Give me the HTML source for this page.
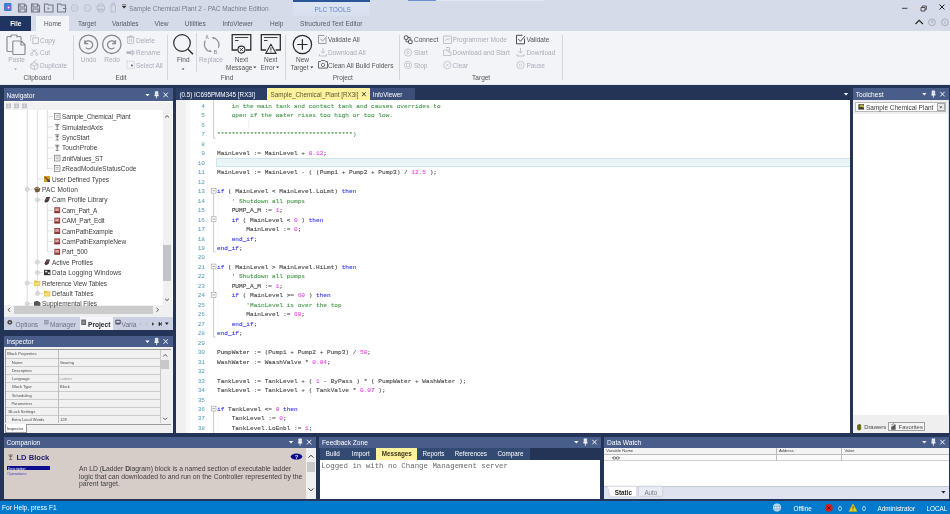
<!DOCTYPE html>
<html lang="en"><head><meta charset="utf-8"><title>Sample Chemical Plant 2 - PAC Machine Edition</title>
<style>
html,body{margin:0;padding:0;}
body{width:950px;height:514px;overflow:hidden;position:relative;background:#233457;font-family:"Liberation Sans",sans-serif;}
#bg div{position:absolute;box-sizing:border-box;}
.t,.tm{position:absolute;white-space:pre;font-family:"Liberation Sans",sans-serif;}
.tm{font-family:"Liberation Mono",monospace;}
#txt,#code{will-change:transform;filter:blur(0.3px);}
#ico,#icb{filter:blur(0.25px);}
#ico,#icb{position:absolute;left:0;top:0;width:950px;height:514px;pointer-events:none;}

#code{position:absolute;left:0;top:0;width:850px;height:433px;overflow:hidden;font-family:"Liberation Mono",monospace;font-size:6.125px;}
.cl{position:absolute;left:0;height:9.47px;line-height:9.47px;white-space:pre;}
.ln{position:absolute;left:190px;width:15px;text-align:right;color:#4d9db8;}
.cd{position:absolute;left:217.0px;-webkit-text-stroke:0.1px;}

</style></head>
<body>
<div id="bg">
<div style="left:0px;top:0px;width:950px;height:31px;background:#d6dbe9;"></div>
<div style="left:292.6px;top:2px;width:77.3px;height:13.5px;background:linear-gradient(#dce4f3,#d8dfee);"></div>
<div style="left:292.6px;top:0px;width:77.3px;height:2px;background:#2b579a;"></div>
<div style="left:408px;top:0px;width:28px;height:1.2px;background:#6d92d2;"></div>
<div style="left:436px;top:0px;width:108px;height:1px;background:#e2e6f0;"></div>
<div style="left:0px;top:15.5px;width:31px;height:15px;background:#1f3461;"></div>
<div style="left:36px;top:16px;width:33px;height:15px;background:#f3f4f7;"></div>
<div style="left:0px;top:31px;width:950px;height:54px;background:#f3f4f7;"></div>
<div style="left:0px;top:84.3px;width:950px;height:1px;background:#e3e6ee;"></div>
<div style="left:72.5px;top:34.5px;width:0.8px;height:45.5px;background:#d3d6df;"></div>
<div style="left:167px;top:34.5px;width:0.8px;height:45.5px;background:#d3d6df;"></div>
<div style="left:285px;top:34.5px;width:0.8px;height:45.5px;background:#d3d6df;"></div>
<div style="left:398.5px;top:34.5px;width:0.8px;height:45.5px;background:#d3d6df;"></div>
<div style="left:562px;top:34.5px;width:0.8px;height:45.5px;background:#d3d6df;"></div>
<div style="left:196.3px;top:32.5px;width:0.8px;height:39.5px;background:#d3d6df;"></div>
<div style="left:3.5px;top:88.3px;width:169px;height:13.2px;background:#485d89;"></div>
<div style="left:3.5px;top:100.9px;width:169px;height:228.9px;background:#ffffff;"></div>
<div style="left:3.5px;top:101.5px;width:169px;height:8.5px;background:#f1f1f2;"></div>
<div style="left:3.5px;top:305.2px;width:169px;height:25.2px;background:#f0f0f0;"></div>
<div style="left:13.5px;top:305.9px;width:139px;height:8px;background:#cbcbcb;"></div>
<div style="left:162.5px;top:110px;width:9.5px;height:196px;background:#f0f0f0;"></div>
<div style="left:163.3px;top:245.3px;width:8px;height:36.2px;background:#c2c3c9;"></div>
<div style="left:3.5px;top:316.5px;width:169px;height:13.3px;background:#cbd1e2;"></div>
<div style="left:80px;top:316.5px;width:32.5px;height:13.3px;background:#f3f5fa;"></div>
<div style="left:3.5px;top:335.6px;width:169px;height:11.8px;background:#485d89;"></div>
<div style="left:3.5px;top:347.4px;width:169px;height:85.2px;background:#f0f0f0;"></div>
<div style="left:5px;top:349px;width:166px;height:74.3px;background:#ffffff;border:0.6px solid #9a9a9a;"></div>
<div style="left:5.5px;top:349.5px;width:154.5px;height:73.4px;background:#f1f1f1;"></div>
<div style="left:5.5px;top:357.82px;width:154.5px;height:0.6px;background:#cbcbcb;"></div>
<div style="left:5.5px;top:366.04px;width:154.5px;height:0.6px;background:#cbcbcb;"></div>
<div style="left:5.5px;top:374.26px;width:154.5px;height:0.6px;background:#cbcbcb;"></div>
<div style="left:5.5px;top:382.48px;width:154.5px;height:0.6px;background:#cbcbcb;"></div>
<div style="left:5.5px;top:390.7px;width:154.5px;height:0.6px;background:#cbcbcb;"></div>
<div style="left:5.5px;top:398.92px;width:154.5px;height:0.6px;background:#cbcbcb;"></div>
<div style="left:5.5px;top:407.14px;width:154.5px;height:0.6px;background:#cbcbcb;"></div>
<div style="left:5.5px;top:415.36px;width:154.5px;height:0.6px;background:#cbcbcb;"></div>
<div style="left:58px;top:349.5px;width:0.8px;height:73.4px;background:#bdbdbd;"></div>
<div style="left:160px;top:349.5px;width:0.6px;height:73.4px;background:#c9c9c9;"></div>
<div style="left:160.6px;top:349.5px;width:10px;height:73.4px;background:#f0f0f0;"></div>
<div style="left:161.3px;top:360.3px;width:7.6px;height:9px;background:#c8c8c8;"></div>
<div style="left:5px;top:423.6px;width:21.5px;height:9px;background:#ffffff;border:0.6px solid #9a9a9a;border-top:none;"></div>
<div style="left:26.5px;top:423.6px;width:144.5px;height:0.7px;background:#9a9a9a;"></div>
<div style="left:175.7px;top:88.3px;width:91.5px;height:11.6px;background:#2a3e66;"></div>
<div style="left:267.3px;top:88.3px;width:103px;height:11.8px;background:#fff29d;"></div>
<div style="left:370.3px;top:88.3px;width:45px;height:11.6px;background:#3b4f7a;"></div>
<div style="left:175.7px;top:100.3px;width:674.3px;height:332.5px;background:#ffffff;"></div>
<div style="left:175.7px;top:100.3px;width:10.5px;height:332.5px;background:#f0f0f0;"></div>
<div style="left:186.2px;top:100.3px;width:4px;height:332.5px;background:#f8f8f8;"></div>
<div style="left:216px;top:157.9px;width:634px;height:9px;background:#e8f4f8;border:0.7px solid #cfe5ec;border-right:none;"></div>
<div style="left:852.7px;top:88.3px;width:96.6px;height:11.6px;background:#485d89;"></div>
<div style="left:852.7px;top:99.9px;width:96.6px;height:333.1px;background:#ffffff;"></div>
<div style="left:852.7px;top:99.9px;width:96.6px;height:14.5px;background:#efefef;"></div>
<div style="left:855px;top:102.3px;width:90.5px;height:9.4px;background:#ffffff;border:0.6px solid #b9b9b9;"></div>
<div style="left:937px;top:103.2px;width:7.6px;height:7.8px;background:#e9e9e9;border:0.5px solid #a8a8a8;"></div>
<div style="left:948.3px;top:99.9px;width:1px;height:333.1px;background:#d0d4de;"></div>
<div style="left:852.7px;top:414.6px;width:96.6px;height:18.4px;background:#efefef;"></div>
<div style="left:888.4px;top:422.2px;width:36.8px;height:9px;background:#f4f4f4;border:0.6px solid #9f9f9f;"></div>
<div style="left:3.5px;top:436.6px;width:312.5px;height:11px;background:#485d89;"></div>
<div style="left:3.5px;top:447.6px;width:312.5px;height:51.599999999999966px;background:#d6cdc9;"></div>
<div style="left:7px;top:466.3px;width:42.5px;height:3.9px;background:#0d0d8c;"></div>
<div style="left:306px;top:447.6px;width:10px;height:51.599999999999966px;background:#f0f0f0;"></div>
<div style="left:306.8px;top:462.3px;width:8px;height:9.6px;background:#c8c8c8;"></div>
<div style="left:319px;top:436.6px;width:282.3px;height:11px;background:#485d89;"></div>
<div style="left:319px;top:447.6px;width:282.3px;height:12px;background:#233457;"></div>
<div style="left:320px;top:447.6px;width:210px;height:12px;background:#334a73;"></div>
<div style="left:376px;top:447.6px;width:41.3px;height:12px;background:#fff29d;"></div>
<div style="left:320px;top:459.6px;width:280.3px;height:38.999999999999964px;background:#ffffff;"></div>
<div style="left:604px;top:436.6px;width:345.3px;height:11px;background:#485d89;"></div>
<div style="left:604px;top:447.6px;width:345.3px;height:51.599999999999966px;background:#ffffff;"></div>
<div style="left:604px;top:447.6px;width:345.3px;height:7.4px;background:#f3f3f3;border-bottom:0.6px solid #bdbdbd;"></div>
<div style="left:604px;top:455.0px;width:345.3px;height:6px;background:#fafafa;border-bottom:0.6px solid #d0d0d0;"></div>
<div style="left:776px;top:447.6px;width:0.7px;height:13.4px;background:#bdbdbd;"></div>
<div style="left:841px;top:447.6px;width:0.7px;height:13.4px;background:#bdbdbd;"></div>
<div style="left:604px;top:485.8px;width:345.3px;height:13.399999999999977px;background:#dfe3ef;border-top:0.6px solid #c2c7d6;"></div>
<div style="left:0px;top:501px;width:950px;height:13px;background:#007acc;"></div>
</div>
<svg id="icb" viewBox="0 0 950 514" width="950" height="514" fill="none">
<ellipse cx="296.5" cy="456.6" rx="5.8" ry="3" fill="#0d0d8c"/>
<path d="M605.5 486.2q2 0 2.6 2.4l1.6 6.4q.5 1.8 2.2 1.8h23.6q1.2 0 1.2-1.2v-9.4z" fill="#ffffff" stroke="#b8bdcc" stroke-width="0.5"/>
<path d="M638.4 486.2v8.8q0 1.2 1.2 1.2h22q1.2 0 1.2-1.2v-8.8z" fill="#e9ecf4" stroke="#b8bdcc" stroke-width="0.5"/>
</svg>
<div id="code"><div class="cl" style="top:101.97px"><span class="ln">4</span><span class="cd"><span style="color:#45984a">    in the main tank and contact tank and causes overrides to</span></span></div>
<div class="cl" style="top:111.44px"><span class="ln">5</span><span class="cd"><span style="color:#45984a">    open if the water rises too high or too low.</span></span></div>
<div class="cl" style="top:120.91px"><span class="ln">6</span><span class="cd"></span></div>
<div class="cl" style="top:130.37px"><span class="ln">7</span><span class="cd"><span style="color:#45984a">*************************************)</span></span></div>
<div class="cl" style="top:139.84px"><span class="ln">8</span><span class="cd"></span></div>
<div class="cl" style="top:149.31px"><span class="ln">9</span><span class="cd"><span style="color:#444444">MainLevel := MainLevel + </span><span style="color:#e94be9">0.12</span><span style="color:#444444">;</span></span></div>
<div class="cl" style="top:158.78px"><span class="ln">10</span><span class="cd"></span></div>
<div class="cl" style="top:168.25px"><span class="ln">11</span><span class="cd"><span style="color:#444444">MainLevel := MainLevel - ( (Pump1 + Pump2 + Pump3) / </span><span style="color:#e94be9">12.5</span><span style="color:#444444"> );</span></span></div>
<div class="cl" style="top:177.72px"><span class="ln">12</span><span class="cd"></span></div>
<div class="cl" style="top:187.19px"><span class="ln">13</span><span class="cd"><span style="color:#3535ee">if</span><span style="color:#444444"> ( MainLevel &lt; MainLevel.LoLmt) </span><span style="color:#3535ee">then</span></span></div>
<div class="cl" style="top:196.66px"><span class="ln">14</span><span class="cd"><span style="color:#45984a">    &#x27; Shutdown all pumps</span></span></div>
<div class="cl" style="top:206.13px"><span class="ln">15</span><span class="cd"><span style="color:#444444">    PUMP_A_M := </span><span style="color:#e94be9">1</span><span style="color:#444444">;</span></span></div>
<div class="cl" style="top:215.6px"><span class="ln">16</span><span class="cd"><span style="color:#3535ee">    if</span><span style="color:#444444"> ( MainLevel &lt; </span><span style="color:#e94be9">0</span><span style="color:#444444"> ) </span><span style="color:#3535ee">then</span></span></div>
<div class="cl" style="top:225.07px"><span class="ln">17</span><span class="cd"><span style="color:#444444">        MainLevel := </span><span style="color:#e94be9">0</span><span style="color:#444444">;</span></span></div>
<div class="cl" style="top:234.54px"><span class="ln">18</span><span class="cd"><span style="color:#3535ee">    end_if</span><span style="color:#444444">;</span></span></div>
<div class="cl" style="top:244.01px"><span class="ln">19</span><span class="cd"><span style="color:#3535ee">end_if</span><span style="color:#444444">;</span></span></div>
<div class="cl" style="top:253.48px"><span class="ln">20</span><span class="cd"></span></div>
<div class="cl" style="top:262.95px"><span class="ln">21</span><span class="cd"><span style="color:#3535ee">if</span><span style="color:#444444"> ( MainLevel &gt; MainLevel.HiLmt) </span><span style="color:#3535ee">then</span></span></div>
<div class="cl" style="top:272.43px"><span class="ln">22</span><span class="cd"><span style="color:#45984a">    &#x27; Shutdown all pumps</span></span></div>
<div class="cl" style="top:281.89px"><span class="ln">23</span><span class="cd"><span style="color:#444444">    PUMP_A_M := </span><span style="color:#e94be9">1</span><span style="color:#444444">;</span></span></div>
<div class="cl" style="top:291.36px"><span class="ln">24</span><span class="cd"><span style="color:#3535ee">    if</span><span style="color:#444444"> ( MainLevel &gt;= </span><span style="color:#e94be9">60</span><span style="color:#444444"> ) </span><span style="color:#3535ee">then</span></span></div>
<div class="cl" style="top:300.83px"><span class="ln">25</span><span class="cd"><span style="color:#45984a">        &#x27;MainLevel is over the top</span></span></div>
<div class="cl" style="top:310.31px"><span class="ln">26</span><span class="cd"><span style="color:#444444">        MainLevel := </span><span style="color:#e94be9">60</span><span style="color:#444444">;</span></span></div>
<div class="cl" style="top:319.77px"><span class="ln">27</span><span class="cd"><span style="color:#3535ee">    end_if</span><span style="color:#444444">;</span></span></div>
<div class="cl" style="top:329.25px"><span class="ln">28</span><span class="cd"><span style="color:#3535ee">end_if</span><span style="color:#444444">;</span></span></div>
<div class="cl" style="top:338.71px"><span class="ln">29</span><span class="cd"></span></div>
<div class="cl" style="top:348.19px"><span class="ln">30</span><span class="cd"><span style="color:#444444">PumpWater := (Pump1 + Pump2 + Pump3) / </span><span style="color:#e94be9">50</span><span style="color:#444444">;</span></span></div>
<div class="cl" style="top:357.66px"><span class="ln">31</span><span class="cd"><span style="color:#444444">WashWater := WaashValve * </span><span style="color:#e94be9">0.04</span><span style="color:#444444">;</span></span></div>
<div class="cl" style="top:367.12px"><span class="ln">32</span><span class="cd"></span></div>
<div class="cl" style="top:376.59px"><span class="ln">33</span><span class="cd"><span style="color:#444444">TankLevel := TankLevel + ( </span><span style="color:#e94be9">1</span><span style="color:#444444"> - ByPass ) * ( PumpWater + WashWater );</span></span></div>
<div class="cl" style="top:386.06px"><span class="ln">34</span><span class="cd"><span style="color:#444444">TankLevel := TankLevel + ( TankValve * </span><span style="color:#e94be9">0.07</span><span style="color:#444444"> );</span></span></div>
<div class="cl" style="top:395.53px"><span class="ln">35</span><span class="cd"></span></div>
<div class="cl" style="top:405.0px"><span class="ln">36</span><span class="cd"><span style="color:#3535ee">if</span><span style="color:#444444"> TankLevel &lt;= </span><span style="color:#e94be9">0</span><span style="color:#3535ee"> then</span></span></div>
<div class="cl" style="top:414.48px"><span class="ln">37</span><span class="cd"><span style="color:#444444">    TankLevel := </span><span style="color:#e94be9">0</span><span style="color:#444444">;</span></span></div>
<div class="cl" style="top:423.94px"><span class="ln">38</span><span class="cd"><span style="color:#444444">    TankLevel.LoEnbl := </span><span style="color:#e94be9">1</span><span style="color:#444444">;</span></span></div></div>
<div id="txt">
<span class="t" style='left:314.58px;top:5.94px;font-size:6.5px;line-height:7.8px;color:#5f86c4;'>PLC TOOLS</span>
<span class="t" style='left:128.9px;top:5.14px;font-size:6.5px;line-height:7.8px;color:#777c88;'>Sample Chemical Plant 2 - PAC Machine Edition</span>
<span class="t" style='left:10.15px;top:19.94px;font-size:6.5px;line-height:7.8px;color:#ffffff;font-weight:700;'>File</span>
<span class="t" style='left:44.08px;top:19.94px;font-size:6.5px;line-height:7.8px;color:#555555;'>Home</span>
<span class="t" style='left:77.97px;top:19.94px;font-size:6.5px;line-height:7.8px;color:#555a66;'>Target</span>
<span class="t" style='left:111.94px;top:19.94px;font-size:6.5px;line-height:7.8px;color:#555a66;'>Variables</span>
<span class="t" style='left:154.51px;top:19.94px;font-size:6.5px;line-height:7.8px;color:#555a66;'>View</span>
<span class="t" style='left:184.78px;top:19.94px;font-size:6.5px;line-height:7.8px;color:#555a66;'>Utilities</span>
<span class="t" style='left:222.45px;top:19.94px;font-size:6.5px;line-height:7.8px;color:#555a66;'>InfoViewer</span>
<span class="t" style='left:270.07px;top:19.94px;font-size:6.5px;line-height:7.8px;color:#555a66;'>Help</span>
<span class="t" style='left:300.06px;top:19.94px;font-size:6.5px;line-height:7.8px;color:#555a66;'>Structured Text Editor</span>
<span class="t" style='left:23.59px;top:74.14px;font-size:6.5px;line-height:7.8px;color:#555;'>Clipboard</span>
<span class="t" style='left:115.4px;top:74.14px;font-size:6.5px;line-height:7.8px;color:#555;'>Edit</span>
<span class="t" style='left:220.68px;top:74.14px;font-size:6.5px;line-height:7.8px;color:#555;'>Find</span>
<span class="t" style='left:332.63px;top:74.14px;font-size:6.5px;line-height:7.8px;color:#555;'>Project</span>
<span class="t" style='left:472.12px;top:74.14px;font-size:6.5px;line-height:7.8px;color:#555;'>Target</span>
<span class="t" style='left:8.19px;top:55.64px;font-size:6.5px;line-height:7.8px;color:#a9adb8;'>Paste</span>
<span class="t" style='left:40px;top:36.64px;font-size:6.5px;line-height:7.8px;color:#a9adb8;'>Copy</span>
<span class="t" style='left:40px;top:49.14px;font-size:6.5px;line-height:7.8px;color:#a9adb8;'>Cut</span>
<span class="t" style='left:40px;top:61.64px;font-size:6.5px;line-height:7.8px;color:#a9adb8;'>Duplicate</span>
<span class="t" style='left:80.73px;top:55.64px;font-size:6.5px;line-height:7.8px;color:#a9adb8;'>Undo</span>
<span class="t" style='left:104.23px;top:55.64px;font-size:6.5px;line-height:7.8px;color:#a9adb8;'>Redo</span>
<span class="t" style='left:136px;top:36.64px;font-size:6.5px;line-height:7.8px;color:#a9adb8;'>Delete</span>
<span class="t" style='left:136px;top:49.14px;font-size:6.5px;line-height:7.8px;color:#a9adb8;'>Rename</span>
<span class="t" style='left:136px;top:61.64px;font-size:6.5px;line-height:7.8px;color:#a9adb8;'>Select All</span>
<span class="t" style='left:176.93px;top:55.64px;font-size:6.5px;line-height:7.8px;color:#555555;'>Find</span>
<span class="t" style='left:199.08px;top:55.64px;font-size:6.5px;line-height:7.8px;color:#a9adb8;'>Replace</span>
<span class="t" style='left:234.82px;top:55.64px;font-size:6.5px;line-height:7.8px;color:#555555;'>Next</span>
<span class="t" style='left:226.01px;top:64.14px;font-size:6.5px;line-height:7.8px;color:#555555;'>Message</span>
<span class="t" style='left:264.07px;top:55.64px;font-size:6.5px;line-height:7.8px;color:#555555;'>Next</span>
<span class="t" style='left:260.43px;top:64.14px;font-size:6.5px;line-height:7.8px;color:#555555;'>Error</span>
<span class="t" style='left:296.0px;top:55.64px;font-size:6.5px;line-height:7.8px;color:#555555;'>New</span>
<span class="t" style='left:290.47px;top:64.14px;font-size:6.5px;line-height:7.8px;color:#555555;'>Target</span>
<span class="t" style='left:328px;top:36.14px;font-size:6.5px;line-height:7.8px;color:#555555;'>Validate All</span>
<span class="t" style='left:328px;top:49.14px;font-size:6.5px;line-height:7.8px;color:#a9adb8;'>Download All</span>
<span class="t" style='left:328px;top:61.64px;font-size:6.5px;line-height:7.8px;color:#555555;'>Clean All Build Folders</span>
<span class="t" style='left:414px;top:36.14px;font-size:6.5px;line-height:7.8px;color:#555555;'>Connect</span>
<span class="t" style='left:414px;top:49.14px;font-size:6.5px;line-height:7.8px;color:#a9adb8;'>Start</span>
<span class="t" style='left:414px;top:61.64px;font-size:6.5px;line-height:7.8px;color:#a9adb8;'>Stop</span>
<span class="t" style='left:452.6px;top:36.14px;font-size:6.5px;line-height:7.8px;color:#a9adb8;'>Programmer Mode</span>
<span class="t" style='left:452.6px;top:49.14px;font-size:6.5px;line-height:7.8px;color:#a9adb8;'>Download and Start</span>
<span class="t" style='left:452.6px;top:61.64px;font-size:6.5px;line-height:7.8px;color:#a9adb8;'>Clear</span>
<span class="t" style='left:526.4px;top:36.14px;font-size:6.5px;line-height:7.8px;color:#555555;'>Validate</span>
<span class="t" style='left:526.4px;top:49.14px;font-size:6.5px;line-height:7.8px;color:#a9adb8;'>Download</span>
<span class="t" style='left:526.4px;top:61.64px;font-size:6.5px;line-height:7.8px;color:#a9adb8;'>Pause</span>
<span class="t" style='left:205.54px;top:35.16px;font-size:4.6px;line-height:5.52px;color:#8f929b;font-weight:700;'>A</span>
<span class="t" style='left:213.64px;top:50.36px;font-size:4.6px;line-height:5.52px;color:#8f929b;font-weight:700;'>B</span>
<span class="t" style='left:6.5px;top:91.68px;font-size:6.6px;line-height:7.92px;color:#ffffff;'>Navigator</span>
<span class="t" style='left:62px;top:113.24px;font-size:6.5px;line-height:7.8px;color:#3d3d3d;letter-spacing:-0.137px;'>Sample_Chemical_Plant</span>
<span class="t" style='left:62px;top:123.64px;font-size:6.5px;line-height:7.8px;color:#3d3d3d;letter-spacing:-0.014px;'>SimulatedAxis</span>
<span class="t" style='left:62px;top:134.04px;font-size:6.5px;line-height:7.8px;color:#3d3d3d;letter-spacing:-0.075px;'>SyncStart</span>
<span class="t" style='left:62px;top:144.44px;font-size:6.5px;line-height:7.8px;color:#3d3d3d;letter-spacing:0.081px;'>TouchProbe</span>
<span class="t" style='left:62px;top:154.84px;font-size:6.5px;line-height:7.8px;color:#3d3d3d;letter-spacing:-0.134px;'>zinitValues_ST</span>
<span class="t" style='left:62px;top:165.24px;font-size:6.5px;line-height:7.8px;color:#3d3d3d;letter-spacing:0.02px;'>zReadModuleStatusCode</span>
<span class="t" style='left:52px;top:175.64px;font-size:6.5px;line-height:7.8px;color:#3d3d3d;letter-spacing:0.002px;'>User Defined Types</span>
<span class="t" style='left:42px;top:186.04px;font-size:6.5px;line-height:7.8px;color:#3d3d3d;letter-spacing:0.18px;'>PAC Motion</span>
<span class="t" style='left:52px;top:196.44px;font-size:6.5px;line-height:7.8px;color:#3d3d3d;letter-spacing:-0.007px;'>Cam Profile Library</span>
<span class="t" style='left:62px;top:206.84px;font-size:6.5px;line-height:7.8px;color:#3d3d3d;letter-spacing:-0.221px;'>Cam_Part_A</span>
<span class="t" style='left:62px;top:217.24px;font-size:6.5px;line-height:7.8px;color:#3d3d3d;letter-spacing:-0.177px;'>CAM_Part_Edit</span>
<span class="t" style='left:62px;top:227.64px;font-size:6.5px;line-height:7.8px;color:#3d3d3d;letter-spacing:-0.099px;'>CamPathExample</span>
<span class="t" style='left:62px;top:238.04px;font-size:6.5px;line-height:7.8px;color:#3d3d3d;letter-spacing:-0.082px;'>CamPathExampleNew</span>
<span class="t" style='left:62px;top:248.44px;font-size:6.5px;line-height:7.8px;color:#3d3d3d;letter-spacing:-0.11px;'>Part_500</span>
<span class="t" style='left:52px;top:258.84px;font-size:6.5px;line-height:7.8px;color:#3d3d3d;letter-spacing:-0.012px;'>Active Profiles</span>
<span class="t" style='left:52px;top:269.24px;font-size:6.5px;line-height:7.8px;color:#3d3d3d;letter-spacing:0.133px;'>Data Logging Windows</span>
<span class="t" style='left:42px;top:279.64px;font-size:6.5px;line-height:7.8px;color:#3d3d3d;letter-spacing:-0.059px;'>Reference View Tables</span>
<span class="t" style='left:52px;top:290.04px;font-size:6.5px;line-height:7.8px;color:#3d3d3d;letter-spacing:0.031px;'>Default Tables</span>
<span class="t" style='left:42px;top:300.44px;font-size:6.5px;line-height:7.8px;color:#3d3d3d;letter-spacing:-0.016px;'>Supplemental Files</span>
<span class="t" style='left:15.38px;top:320.78px;font-size:6.6px;line-height:7.92px;color:#6b7388;'>Options</span>
<span class="t" style='left:49.98px;top:320.78px;font-size:6.6px;line-height:7.92px;color:#6b7388;'>Manager</span>
<span class="t" style='left:88.06px;top:320.78px;font-size:6.6px;line-height:7.92px;color:#2b2b2b;font-weight:700;'>Project</span>
<span class="t" style='left:121.54px;top:320.78px;font-size:6.6px;line-height:7.92px;color:#6b7388;'>Varia</span>
<span class="t" style='left:6.5px;top:338.28px;font-size:6.6px;line-height:7.92px;color:#ffffff;'>Inspector</span>
<span class="t" style='left:7.34px;top:352.44px;font-size:4.0px;line-height:4.8px;color:#4c4c4c;'>Block Properties</span>
<span class="t" style='left:11.81px;top:360.66px;font-size:4.0px;line-height:4.8px;color:#4c4c4c;'>Name</span>
<span class="t" style='left:11.7px;top:368.88px;font-size:4.0px;line-height:4.8px;color:#4c4c4c;'>Description</span>
<span class="t" style='left:11.95px;top:377.1px;font-size:4.0px;line-height:4.8px;color:#4c4c4c;'>Language</span>
<span class="t" style='left:12.15px;top:385.32px;font-size:4.0px;line-height:4.8px;color:#4c4c4c;'>Block Type</span>
<span class="t" style='left:11.9px;top:393.54px;font-size:4.0px;line-height:4.8px;color:#4c4c4c;'>Scheduling</span>
<span class="t" style='left:11.46px;top:401.76px;font-size:4.0px;line-height:4.8px;color:#4c4c4c;'>Parameters</span>
<span class="t" style='left:8.56px;top:409.98px;font-size:4.0px;line-height:4.8px;color:#4c4c4c;'>BLock Settings</span>
<span class="t" style='left:11.7px;top:418.2px;font-size:4.0px;line-height:4.8px;color:#4c4c4c;'>Extra Local Words</span>
<span class="t" style='left:59.63px;top:360.64px;font-size:4.0px;line-height:4.8px;color:#4c4c4c;'>Gearing</span>
<span class="t" style='left:59.62px;top:377.14px;font-size:4.0px;line-height:4.8px;color:#a0a0a0;'>Ladder</span>
<span class="t" style='left:60.06px;top:385.34px;font-size:4.0px;line-height:4.8px;color:#4c4c4c;'>Block</span>
<span class="t" style='left:60.06px;top:418.24px;font-size:4.0px;line-height:4.8px;color:#4c4c4c;'>128</span>
<span class="t" style='left:6.67px;top:426.84px;font-size:4.0px;line-height:4.8px;color:#333;'>Inspector</span>
<span class="t" style='left:179.43px;top:91.07px;font-size:6.3px;line-height:7.56px;color:#ffffff;'>(0.5) IC695PMM345 [RX3i]</span>
<span class="t" style='left:270.55px;top:91.07px;font-size:6.3px;line-height:7.56px;color:#5b5536;'>Sample_Chemical_Plant [RX3i]</span>
<span class="t" style='left:372.67px;top:91.07px;font-size:6.3px;line-height:7.56px;color:#ffffff;'>InfoViewer</span>
<span class="t" style='left:855.7px;top:90.88px;font-size:6.6px;line-height:7.92px;color:#ffffff;'>Toolchest</span>
<span class="t" style='left:866px;top:103.85px;font-size:6.49px;line-height:7.79px;color:#3a3a3a;'>Sample Chemical Plant</span>
<span class="t" style='left:864.17px;top:423.82px;font-size:5.9px;line-height:7.08px;color:#4a4a4a;'>Drawers</span>
<span class="t" style='left:898.62px;top:423.82px;font-size:5.9px;line-height:7.08px;color:#4a4a4a;'>Favorites</span>
<span class="t" style='left:6.5px;top:438.88px;font-size:6.6px;line-height:7.92px;color:#ffffff;'>Companion</span>
<span class="t" style='left:16.43px;top:452.74px;font-size:7.6px;line-height:9.12px;color:#1e1b6e;font-weight:700;'>LD Block</span>
<span class="t" style='left:294.97px;top:454.1px;font-size:5px;line-height:6.0px;color:#ffffff;font-weight:700;'>?</span>
<span class="t" style='left:7.65px;top:466.8px;font-size:3.6px;line-height:4.32px;color:#ffffff;'>Description</span>
<span class="t" style='left:7.36px;top:472.2px;font-size:3.9px;line-height:4.68px;color:#4343c4;'>Operations</span>
<span class="t" style='left:79px;top:465.08px;font-size:6.75px;line-height:8.1px;color:#404040;'>An LD (<b>L</b>adder <b>D</b>iagram) block is a named section of executable ladder</span>
<span class="t" style='left:79px;top:472.52px;font-size:6.85px;line-height:8.22px;color:#404040;'>logic that can downloaded to and run on the Controller represented by the</span>
<span class="t" style='left:79px;top:479.89px;font-size:6.89px;line-height:8.27px;color:#404040;'>parent target.</span>
<span class="t" style='left:322px;top:438.88px;font-size:6.6px;line-height:7.92px;color:#ffffff;'>Feedback Zone</span>
<span class="t" style='left:325.75px;top:450.37px;font-size:6.3px;line-height:7.56px;color:#ffffff;'>Build</span>
<span class="t" style='left:351.82px;top:450.37px;font-size:6.3px;line-height:7.56px;color:#ffffff;'>Import</span>
<span class="t" style='left:381.69px;top:450.37px;font-size:6.3px;line-height:7.56px;color:#3b371f;font-weight:700;'>Messages</span>
<span class="t" style='left:422.47px;top:450.37px;font-size:6.3px;line-height:7.56px;color:#ffffff;'>Reports</span>
<span class="t" style='left:454.64px;top:450.37px;font-size:6.3px;line-height:7.56px;color:#ffffff;'>References</span>
<span class="t" style='left:497.54px;top:450.37px;font-size:6.3px;line-height:7.56px;color:#ffffff;'>Compare</span>
<span class="tm" style='left:321.3px;top:461.65px;font-size:7.42px;line-height:8.9px;color:#6a6a6a;'>Logged in with no Change Management server</span>
<span class="t" style='left:607px;top:438.88px;font-size:6.6px;line-height:7.92px;color:#ffffff;'>Data Watch</span>
<span class="t" style='left:606.34px;top:449.48px;font-size:4.1px;line-height:4.92px;color:#444;'>Variable Name</span>
<span class="t" style='left:778.88px;top:449.48px;font-size:4.1px;line-height:4.92px;color:#444;'>Address</span>
<span class="t" style='left:844.41px;top:449.48px;font-size:4.1px;line-height:4.92px;color:#444;'>Value</span>
<span class="t" style='left:614.82px;top:488.77px;font-size:6.3px;line-height:7.56px;color:#222;font-weight:700;'>Static</span>
<span class="t" style='left:644.42px;top:488.77px;font-size:6.3px;line-height:7.56px;color:#777;'>Auto</span>
<span class="t" style='left:2px;top:504.18px;font-size:6.6px;line-height:7.92px;color:#ffffff;'>For Help, press F1</span>
<span class="t" style='left:793.56px;top:504.5px;font-size:6.4px;line-height:7.68px;color:#ffffff;'>Offline</span>
<span class="t" style='left:838.37px;top:504.5px;font-size:6.4px;line-height:7.68px;color:#ffffff;'>0</span>
<span class="t" style='left:862.37px;top:504.5px;font-size:6.4px;line-height:7.68px;color:#ffffff;'>0</span>
<span class="t" style='left:877.4px;top:504.5px;font-size:6.4px;line-height:7.68px;color:#ffffff;'>Administrator</span>
<span class="t" style='left:926.41px;top:504.5px;font-size:6.4px;line-height:7.68px;color:#ffffff;'>LOCAL</span>
</div>
<svg id="ico" viewBox="0 0 950 514" width="950" height="514" fill="none">
<rect x="4" y="3" width="7.5" height="8" rx="1" fill="#3b7fd1"/><circle cx="8.6" cy="7.6" r="2" fill="#c65bd0"/><circle cx="8.6" cy="7.6" r="0.8" fill="#fff"/>
<path d="M18.5 4h6l2 2v6h-8z M20.0 4v3h4.5v-3 M20.0 12v-3h5v3" stroke="#777a84" stroke-width="1.1"/>
<path d="M31.5 4h6l2 2v6h-8z M33.0 4v3h4.5v-3 M33.0 12v-3h5v3" stroke="#777a84" stroke-width="1.1"/>
<path d="M44.5 4h3l1 1h4.5v7h-8.5z" stroke="#777a84" stroke-width="1.1"/><path d="M47.5 7l2.5 1.5-2.5 1.5z" fill="#8d919c"/>
<path d="M57.5 4h3l1 1h4v7h-8z M63 8.5h3.5" stroke="#777a84" stroke-width="1.1"/>
<circle cx="74.5" cy="8" r="3.4" stroke="#b4b8c2" stroke-width="0.7"/><path d="M73.0 8h3" stroke="#b4b8c2" stroke-width="0.7"/>
<circle cx="87.5" cy="8" r="3.4" stroke="#b4b8c2" stroke-width="0.7"/><path d="M86.0 8h3" stroke="#b4b8c2" stroke-width="0.7"/>
<path d="M97 6h7.5v4h-7.5z M98.5 6v-2h4.5v2 M98.5 9h4.5v3h-4.5z" stroke="#b4b8c2" stroke-width="0.8"/>
<path d="M111 5h4.5v7h-4.5z M112 5v-2h2.5v2" stroke="#b4b8c2" stroke-width="0.8"/>
<path d="M121.8 6h4.6l-2.3 2.6z" fill="#333"/><path d="M122 4.8h4.2" stroke="#333" stroke-width="0.7"/>
<path d="M902 8.3h5.5" stroke="#333" stroke-width="0.9"/>
<path d="M921 7.5h4v3.5h-4z M922.3 7.5v-1.5h4v3.5h-1.3" stroke="#333" stroke-width="0.8"/>
<path d="M939.5 4.5l5 5 M944.5 4.5l-5 5" stroke="#222" stroke-width="1"/>
<path d="M915.5 24l3.7-3.7 3.7 3.7" stroke="#222" stroke-width="1.1"/>
<circle cx="932" cy="22.3" r="3.4" stroke="#8d919c" stroke-width="0.6"/><circle cx="945" cy="22.3" r="3.4" stroke="#8d919c" stroke-width="0.6"/>
<path d="M931 21.3q1-1.2 2 0q0 .8-1 1.4v.6 M945 21.2v2.6" stroke="#8d919c" stroke-width="0.6"/>
<path d="M11 36.5h-3.2q-.8 0-.8.8v13.4q0 .8.8.8h4.2 M17 36.5h3.2q.8 0 .8.8v3 M11 37.5v-1.8q0-.7.7-.7h4.6q.7 0 .7.7v1.8" stroke="#8a8d96" stroke-width="1.2"/>
<path d="M13.5 41h8l3.5 3.5v9.3q0 .7-.7.7h-10.8q-.7 0-.7-.7v-12.1q0-.7.7-.7z M21 41v4h4" stroke="#8a8d96" stroke-width="1.2"/>
<path d="M14.2 68.5h2.6l-1.3 1.5z" fill="#8d919c"/>
<path d="M30.6 40.6v-5h5.2" stroke="#b4b8c2" stroke-width="0.8" stroke-dasharray="1.2 .6"/><path d="M32.8 37.8h5.6v5.8h-5.6z" stroke="#b4b8c2" stroke-width="0.9"/>
<path d="M31.5 49l5.5 4 M37 49l-5.5 4" stroke="#b4b8c2" stroke-width="0.8"/><circle cx="31.7" cy="54.3" r="1.2" stroke="#b4b8c2" stroke-width="0.7"/><circle cx="36.8" cy="54.3" r="1.2" stroke="#b4b8c2" stroke-width="0.7"/>
<path d="M30.8 64.2l3.6-1.8 3.6 1.8v3.8l-3.6 1.8-3.6-1.8z M30.8 64.2l3.6 1.8 3.6-1.8 M34.4 66v3.8 M33.2 62.4l3.4-2.6" stroke="#b4b8c2" stroke-width="0.8"/>
<circle cx="88.5" cy="44.3" r="9.2" stroke="#85888f" stroke-width="1.3"/><circle cx="111.8" cy="44.3" r="9.2" stroke="#85888f" stroke-width="1.3"/>
<path d="M84.8 40.2v3.4h3.4 M85.1 43A4 4 0 1 1 85.8 47.6" stroke="#85888f" stroke-width="1.3"/>
<path d="M115.4 40.2v3.4h-3.4 M115.1 43A4 4 0 1 0 114.4 47.6" stroke="#85888f" stroke-width="1.3"/><path d="M115.8 40.4v3.6h-3.6z" fill="#8d919c"/>
<path d="M127.6 37h6v6.4h-6z M129.6 37v-1.2h2v1.2 M126.8 37h7.6 M129.6 38.6v3.2 M131.6 38.6v3.2" stroke="#b4b8c2" stroke-width="0.8"/>
<path d="M126.5 51.2h5v2.8h-5z" fill="#b4b8c2"/><path d="M131.5 51.2h2.6v2.8h-2.6 M132.3 49.6v6" stroke="#b4b8c2" stroke-width="0.8"/>
<path d="M127 61.3h7.4v7.4h-7.4z" stroke="#b4b8c2" stroke-width="0.7" stroke-dasharray="1 .8"/><rect x="131" y="64.6" width="1.8" height="1.8" fill="#666"/>
<circle cx="182" cy="43" r="8.3" stroke="#2a2a2a" stroke-width="1.2"/><path d="M188 49.2l5 5" stroke="#2a2a2a" stroke-width="1.4"/>
<path d="M181.8 68.5h2.6l-1.3 1.5z" fill="#333"/>
<path d="M205.3 40.6Q202.6 46 207.6 50.8L210.6 51.7" stroke="#8f929b" stroke-width="1.25"/><path d="M211.8 52l-3-.2 1.2-2.2z" fill="#8f929b"/>
<path d="M218.4 47.8Q220.4 42.4 215.4 38.6L213.2 37.6" stroke="#8f929b" stroke-width="1.25"/><path d="M211.8 37l3 .2-1.2 2.2z" fill="#8f929b"/>
<path d="M237.5 50h-5.3v-15.4h18.6v15.4h-5.3" stroke="#2e2e2e" stroke-width="1.3"/><path d="M235 37.5h13.2 M235 40.5h3.5" stroke="#2e2e2e" stroke-width="0.9"/><circle cx="241.4" cy="49.6" r="3.5" stroke="#2e2e2e" stroke-width="1.1"/><path d="M239.9 48.1l3 3 M242.9 48.1l-3 3" stroke="#2e2e2e" stroke-width="0.9"/>
<path d="M253.3 66.6h3l-1.5 1.7z" fill="#333"/>
<path d="M266 50h-4.7v-15.4h19v15.4h-4.7" stroke="#2e2e2e" stroke-width="1.3"/><path d="M264 37.5h13.6 M264 40.5h3.5" stroke="#2e2e2e" stroke-width="0.9"/><path d="M270.9 44.2l5.2 9.2h-10.4z" stroke="#2e2e2e" stroke-width="1.1" stroke-linejoin="round"/><path d="M270.9 47.3v3.2 M270.9 51.3v.9" stroke="#2e2e2e" stroke-width="0.9"/>
<path d="M276.1 66.6h3l-1.5 1.7z" fill="#333"/>
<circle cx="302.4" cy="44.5" r="9.2" stroke="#2a2a2a" stroke-width="1.2"/><path d="M297.2 44.5h10.4 M302.4 39.3v10.4" stroke="#2a2a2a" stroke-width="1.2"/>
<path d="M310.3 66.6h3l-1.5 1.7z" fill="#333"/>
<path d="M326 38v5.5h-7.5v-8h6" stroke="#8d919c" stroke-width="0.9"/><path d="M320.5 39l2 2.2 4.3-5" stroke="#8d919c" stroke-width="0.9"/>
<path d="M323 48v5 M321 51.2l2 2 2-2 M319.5 54v2h7v-2" stroke="#b4b8c2" stroke-width="0.8"/>
<path d="M318.5 61.6h2l.8-1h3.4l.8 1h2v6.5h-9z" stroke="#5a5a5a" stroke-width="0.9"/><circle cx="323" cy="64.9" r="1.7" stroke="#5a5a5a" stroke-width="0.8"/>
<rect x="404.3" y="35.8" width="3.6" height="3.6" rx="1" stroke="#3c3c3c" stroke-width="0.9"/><rect x="408.5" y="40" width="3.6" height="3.6" rx="1" stroke="#3c3c3c" stroke-width="0.9"/><path d="M408 37.5h2.2v2.3 M406 39.5v2.3h2.4" stroke="#3c3c3c" stroke-width="0.8"/>
<circle cx="408" cy="52.5" r="3.7" stroke="#b4b8c2" stroke-width="0.7"/><path d="M407 50.8l2.5 1.7-2.5 1.7z" stroke="#b4b8c2" stroke-width="0.6"/>
<circle cx="408" cy="65" r="3.7" stroke="#b4b8c2" stroke-width="0.7"/><rect x="406.5" y="63.5" width="3" height="3" stroke="#b4b8c2" stroke-width="0.6"/>
<path d="M443.5 36h8v7.5h-8z M445 41l2-2.3 1.5 1.3 1.8-2" stroke="#b4b8c2" stroke-width="0.8"/>
<path d="M446 47.5h3.5v4 M443.5 55.5v-5.5h4.5v2h3v3.5z" stroke="#b4b8c2" stroke-width="0.8"/>
<circle cx="447.3" cy="65" r="3.7" stroke="#b4b8c2" stroke-width="0.7"/><path d="M446 63.7l2.6 2.6 M448.6 63.7l-2.6 2.6" stroke="#b4b8c2" stroke-width="0.6"/>
<path d="M524.5 38.5v5.3h-8v-8.5h6" stroke="#3c3c3c" stroke-width="0.9"/><path d="M518.3 39l2.2 2.3 4.5-5.3" stroke="#3c3c3c" stroke-width="0.9"/>
<path d="M520.5 48v5 M518.5 51.2l2 2 2-2 M517 54v2h7v-2" stroke="#b4b8c2" stroke-width="0.8"/>
<circle cx="520.5" cy="65" r="3.7" stroke="#b4b8c2" stroke-width="0.7"/><path d="M519.6 63.5v3 M521.4 63.5v3" stroke="#b4b8c2" stroke-width="0.6"/>
<path d="M145.3 93.89999999999999h4.4l-2.2 2.4z" fill="#fff"/>
<path d="M155.3 91.69999999999999h2.6v4h-2.6z" fill="#dbe2ef" stroke="#fff" stroke-width="0.7"/><path d="M154.3 95.69999999999999h4.6 M156.6 95.69999999999999v2.8" stroke="#fff" stroke-width="0.8"/>
<path d="M163.5 92.6l4.4 4.6 M167.9 92.6l-4.4 4.6" stroke="#fff" stroke-width="0.95"/>
<rect x="6" y="103.6" width="5" height="4.6" fill="#b9bbc2"/><path d="M6 105.2h5 M6 106.8h5 M8.5 103.6v4.6" stroke="#e4e4e8" stroke-width="0.5"/>
<rect x="14" y="103.6" width="5" height="4.6" fill="#b9bbc2"/><path d="M14 105.2h5 M14 106.8h5 M16.5 103.6v4.6" stroke="#e4e4e8" stroke-width="0.5"/>
<rect x="22" y="103.6" width="5" height="4.6" fill="#b9bbc2"/><path d="M22 105.2h5 M22 106.8h5 M24.5 103.6v4.6" stroke="#e4e4e8" stroke-width="0.5"/>
<path d="M27.2 110v196 M37.4 110v183.5 M47.4 110v59 M47.4 203v49" stroke="#d2d2d2" stroke-width="0.7"/>
<path d="M47.4 116.6h5.600000000000001" stroke="#d2d2d2" stroke-width="0.7"/>
<rect x="54.5" y="113.6" width="5.5" height="5.8" stroke="#777" stroke-width="0.7" fill="#fff"/><path d="M55.5 115.39999999999999h3.4 M55.5 117.19999999999999h3.4" stroke="#777" stroke-width="0.6"/>
<path d="M47.4 127.0h5.600000000000001" stroke="#d2d2d2" stroke-width="0.7"/>
<path d="M55 124.4h4.4 M55.6 126.0h3.2 M57.2 124.4v5 M55.6 129.6h3.2" stroke="#666" stroke-width="0.8"/>
<path d="M47.4 137.4h5.600000000000001" stroke="#d2d2d2" stroke-width="0.7"/>
<path d="M55 134.8h4.4 M55.6 136.4h3.2 M57.2 134.8v5 M55.6 140.0h3.2" stroke="#666" stroke-width="0.8"/>
<path d="M47.4 147.8h5.600000000000001" stroke="#d2d2d2" stroke-width="0.7"/>
<path d="M55 145.20000000000002h4.4 M55.6 146.8h3.2 M57.2 145.20000000000002v5 M55.6 150.4h3.2" stroke="#666" stroke-width="0.8"/>
<path d="M47.4 158.2h5.600000000000001" stroke="#d2d2d2" stroke-width="0.7"/>
<rect x="54.5" y="155.2" width="5.5" height="5.8" stroke="#777" stroke-width="0.7" fill="#fff"/><path d="M55.5 157.0h3.4 M55.5 158.79999999999998h3.4" stroke="#777" stroke-width="0.6"/>
<path d="M47.4 168.6h5.600000000000001" stroke="#d2d2d2" stroke-width="0.7"/>
<rect x="54.5" y="165.6" width="5.5" height="5.8" stroke="#777" stroke-width="0.7" fill="#fff"/><path d="M55.5 167.4h3.4 M55.5 169.2h3.4" stroke="#777" stroke-width="0.6"/>
<path d="M37.4 179.0h5.600000000000001" stroke="#d2d2d2" stroke-width="0.7"/>
<rect x="44" y="176.0" width="6" height="6" fill="#c9a227"/><path d="M45 177.0l4 4" stroke="#b0302a" stroke-width="1.4"/><rect x="47.4" y="179.4" width="2.6" height="2.6" fill="#4b4b4b"/>
<path d="M27.2 189.39999999999998h5.800000000000001" stroke="#d2d2d2" stroke-width="0.7"/>
<circle cx="27.2" cy="189.39999999999998" r="2.1" fill="#d9d9d9" stroke="#c4c4c4" stroke-width="0.5"/>
<path d="M34 188.39999999999998l3-2 3.4 2-1 3.4-3.6.6z" fill="#6d5a3a"/><path d="M35.2 188.79999999999998l2-1 2 1.2" stroke="#d6c28a" stroke-width="0.7"/>
<path d="M37.4 199.8h5.600000000000001" stroke="#d2d2d2" stroke-width="0.7"/>
<circle cx="37.4" cy="199.8" r="2.1" fill="#d9d9d9" stroke="#c4c4c4" stroke-width="0.5"/>
<path d="M44.3 201.3l2.2-4.3h3.6l-1.6 4.6-2.6 1.2z" fill="#4a3440"/><path d="M46 199.8l2.6-1.4" stroke="#a78" stroke-width="0.6"/>
<path d="M47.4 210.2h5.600000000000001" stroke="#d2d2d2" stroke-width="0.7"/>
<rect x="54.3" y="207.2" width="5.8" height="6" fill="#a04848"/><rect x="55.3" y="208.39999999999998" width="3.6" height="2.6" fill="#d9a8a8"/><path d="M54.3 212.2h5.8" stroke="#6b2c2c" stroke-width="0.8"/>
<path d="M47.4 220.6h5.600000000000001" stroke="#d2d2d2" stroke-width="0.7"/>
<rect x="54.3" y="217.6" width="5.8" height="6" fill="#a04848"/><rect x="55.3" y="218.79999999999998" width="3.6" height="2.6" fill="#d9a8a8"/><path d="M54.3 222.6h5.8" stroke="#6b2c2c" stroke-width="0.8"/>
<path d="M47.4 231.0h5.600000000000001" stroke="#d2d2d2" stroke-width="0.7"/>
<rect x="54.3" y="228.0" width="5.8" height="6" fill="#a04848"/><rect x="55.3" y="229.2" width="3.6" height="2.6" fill="#d9a8a8"/><path d="M54.3 233.0h5.8" stroke="#6b2c2c" stroke-width="0.8"/>
<path d="M47.4 241.4h5.600000000000001" stroke="#d2d2d2" stroke-width="0.7"/>
<rect x="54.3" y="238.4" width="5.8" height="6" fill="#a04848"/><rect x="55.3" y="239.6" width="3.6" height="2.6" fill="#d9a8a8"/><path d="M54.3 243.4h5.8" stroke="#6b2c2c" stroke-width="0.8"/>
<path d="M47.4 251.8h5.600000000000001" stroke="#d2d2d2" stroke-width="0.7"/>
<rect x="54.3" y="248.8" width="5.8" height="6" fill="#a04848"/><rect x="55.3" y="250.0" width="3.6" height="2.6" fill="#d9a8a8"/><path d="M54.3 253.8h5.8" stroke="#6b2c2c" stroke-width="0.8"/>
<path d="M37.4 262.2h5.600000000000001" stroke="#d2d2d2" stroke-width="0.7"/>
<circle cx="37.4" cy="262.2" r="2.1" fill="#d9d9d9" stroke="#c4c4c4" stroke-width="0.5"/>
<path d="M44.3 263.7l2.2-4.3h3.6l-1.6 4.6-2.6 1.2z" fill="#4a3440"/><path d="M46 262.2l2.6-1.4" stroke="#a78" stroke-width="0.6"/>
<path d="M37.4 272.6h5.600000000000001" stroke="#d2d2d2" stroke-width="0.7"/>
<circle cx="37.4" cy="272.6" r="2.1" fill="#d9d9d9" stroke="#c4c4c4" stroke-width="0.5"/>
<rect x="44" y="269.8" width="6.4" height="5.4" fill="#333"/><rect x="44.9" y="270.8" width="2.4" height="1.6" fill="#ddd"/><rect x="47.9" y="272.40000000000003" width="1.8" height="1.6" fill="#e9e9e9"/>
<path d="M27.2 283.0h5.800000000000001" stroke="#d2d2d2" stroke-width="0.7"/>
<circle cx="27.2" cy="283.0" r="2.1" fill="#d9d9d9" stroke="#c4c4c4" stroke-width="0.5"/>
<path d="M34 280.4h2.4l.7.8h3.2v4.8h-6.3z" fill="#e8c04a"/><path d="M35 282.4h5.3l-1 3h-5.3z" fill="#f6dc82"/>
<path d="M37.4 293.4h5.600000000000001" stroke="#d2d2d2" stroke-width="0.7"/>
<circle cx="37.4" cy="293.4" r="2.1" fill="#d9d9d9" stroke="#c4c4c4" stroke-width="0.5"/>
<path d="M44 290.79999999999995h2.4l.7.8h3.2v4.8h-6.3z" fill="#e8c04a"/><path d="M45 292.79999999999995h5.3l-1 3h-5.3z" fill="#f6dc82"/>
<path d="M27.2 303.8h5.800000000000001" stroke="#d2d2d2" stroke-width="0.7"/>
<circle cx="27.2" cy="303.8" r="2.1" fill="#d9d9d9" stroke="#c4c4c4" stroke-width="0.5"/>
<path d="M34 301.8l3.4-1 3 1.6v3.4h-6.4z" fill="#555"/>
<path d="M10 307.8l-1.8 2 1.8 2 M156.6 307.8l1.8 2-1.8 2" stroke="#444" stroke-width="0.9"/>
<path d="M165 117.5l2-1.9 2 1.9 M165 298.7l2 1.9 2-1.9" stroke="#444" stroke-width="0.9"/>
<circle cx="9.8" cy="322.3" r="2.4" fill="#444"/><circle cx="9.8" cy="322.3" r="0.9" fill="#cbd1e2"/>
<rect x="44" y="320" width="4.6" height="4.4" fill="#8e95a6"/><path d="M44 321.5h4.6 M44 323h4.6" stroke="#cbd1e2" stroke-width="0.5"/>
<rect x="81.3" y="319.6" width="4.6" height="5.4" fill="#555"/><path d="M82 321h3.2 M82 322.4h3.2 M82 323.8h3.2" stroke="#ddd" stroke-width="0.5"/>
<rect x="115.3" y="319.8" width="5.4" height="4.6" rx=".8" fill="#4e5566"/><rect x="116.3" y="320.8" width="3.4" height="2" fill="#cbd1e2"/>
<path d="M141 322.4l-1.6 1.6 1.6 1.6z" fill="#b7bdcc"/><path d="M146.6 322.2v3.6" stroke="#b7bdcc" stroke-width="0.6"/>
<path d="M152.2 322.2l1.9 1.8-1.9 1.8z" fill="#222"/><path d="M159 322.2l1.9 1.8-1.9 1.8z M161.5 322.2v3.6" fill="#222" stroke="#222" stroke-width="0.6"/><path d="M165 322.6h3.6l-1.8 2.4z" fill="#222"/>
<path d="M145.3 340.5h4.4l-2.2 2.4z" fill="#fff"/>
<path d="M155.3 338.3h2.6v4h-2.6z" fill="#dbe2ef" stroke="#fff" stroke-width="0.7"/><path d="M154.3 342.3h4.6 M156.6 342.3v2.8" stroke="#fff" stroke-width="0.8"/>
<path d="M163.5 339.2l4.4 4.6 M167.9 339.2l-4.4 4.6" stroke="#fff" stroke-width="0.95"/>
<path d="M163.2 356.5l2-2 2 2 M163.2 417.7l2 2 2-2" stroke="#444" stroke-width="0.9"/>
<path d="M362 92.2l3.8 4 M365.8 92.2l-3.8 4" stroke="#333" stroke-width="0.9"/>
<path d="M843.8 93h4.4l-2.2 2.4z" fill="#fff"/>
<path d="M213.6 100v38.21000000000001h2" stroke="#b5b5b5" stroke-width="0.7"/>
<path d="M248.7 120.44v8" stroke="#e2e2e2" stroke-width="0.6"/>
<path d="M213.6 193.23000000000002V251.85000000000002h2" stroke="#b5b5b5" stroke-width="0.7"/>
<path d="M213.6 268.99V337.08000000000004h2" stroke="#b5b5b5" stroke-width="0.7"/>
<path d="M213.6 411.04V433" stroke="#b5b5b5" stroke-width="0.7"/>
<rect x="211.2" y="188.33" width="4.8" height="4.8" fill="#fff" stroke="#9a9a9a" stroke-width="0.6"/><path d="M212.3 190.73000000000002h2.6" stroke="#666" stroke-width="0.6"/>
<rect x="211.2" y="216.74" width="4.8" height="4.8" fill="#fff" stroke="#9a9a9a" stroke-width="0.6"/><path d="M212.3 219.14000000000001h2.6" stroke="#666" stroke-width="0.6"/>
<rect x="211.2" y="264.09000000000003" width="4.8" height="4.8" fill="#fff" stroke="#9a9a9a" stroke-width="0.6"/><path d="M212.3 266.49h2.6" stroke="#666" stroke-width="0.6"/>
<rect x="211.2" y="292.5" width="4.8" height="4.8" fill="#fff" stroke="#9a9a9a" stroke-width="0.6"/><path d="M212.3 294.9h2.6" stroke="#666" stroke-width="0.6"/>
<rect x="211.2" y="406.14000000000004" width="4.8" height="4.8" fill="#fff" stroke="#9a9a9a" stroke-width="0.6"/><path d="M212.3 408.54h2.6" stroke="#666" stroke-width="0.6"/>
<path d="M218.2 195.7V242.58" stroke="#e8e8e8" stroke-width="0.6" stroke-dasharray="1 1"/>
<path d="M218.2 271.46000000000004V327.81" stroke="#e8e8e8" stroke-width="0.6" stroke-dasharray="1 1"/>
<path d="M218.2 413.51000000000005V433" stroke="#e8e8e8" stroke-width="0.6" stroke-dasharray="1 1"/>
<path d="M922.1 93.1h4.4l-2.2 2.4z" fill="#fff"/>
<path d="M932.1 90.89999999999999h2.6v4h-2.6z" fill="#dbe2ef" stroke="#fff" stroke-width="0.7"/><path d="M931.1 94.89999999999999h4.6 M933.4000000000001 94.89999999999999v2.8" stroke="#fff" stroke-width="0.8"/>
<path d="M940.3000000000001 91.8l4.4 4.6 M944.7 91.8l-4.4 4.6" stroke="#fff" stroke-width="0.95"/>
<rect x="858.4" y="104.2" width="5.6" height="5.4" fill="#3b3b2a"/><path d="M858.4 106.6l3-2 2.6 1.2v1.6z" fill="#c4b44a"/>
<path d="M939.4 106.6h2.8l-1.4 1.6z" fill="#333"/>
<path d="M857 425.2l2.2-1.2 2 .8v4.6l-2 1-2.2-.8z" fill="#6f7a1e"/><path d="M859.2 424v6.4" stroke="#3c4210" stroke-width="0.5"/>
<path d="M891.2 429.8v-3.4h1.4v-1h1.4v-1h1.6v5.4z" fill="#555"/><path d="M891.2 425l3-1.6" stroke="#555" stroke-width="0.6"/>
<path d="M288.8 441.1h4.4l-2.2 2.4z" fill="#fff"/>
<path d="M298.8 438.90000000000003h2.6v4h-2.6z" fill="#dbe2ef" stroke="#fff" stroke-width="0.7"/><path d="M297.8 442.90000000000003h4.6 M300.1 442.90000000000003v2.8" stroke="#fff" stroke-width="0.8"/>
<path d="M307.0 439.8l4.4 4.6 M311.4 439.8l-4.4 4.6" stroke="#fff" stroke-width="0.95"/>
<path d="M8.3 455h4.6 M9 456.4h3.2 M10.6 455v4.2 M9 459.4h3.2" stroke="#555" stroke-width="0.7"/>
<path d="M308.6 457.6l2.4-2.4 2.4 2.4 M308.6 488.4l2.4 2.4 2.4-2.4" stroke="#333" stroke-width="1"/>
<path d="M574.0999999999999 441.1h4.4l-2.2 2.4z" fill="#fff"/>
<path d="M584.0999999999999 438.90000000000003h2.6v4h-2.6z" fill="#dbe2ef" stroke="#fff" stroke-width="0.7"/><path d="M583.0999999999999 442.90000000000003h4.6 M585.4 442.90000000000003v2.8" stroke="#fff" stroke-width="0.8"/>
<path d="M592.3 439.8l4.4 4.6 M596.6999999999999 439.8l-4.4 4.6" stroke="#fff" stroke-width="0.95"/>
<path d="M922.0999999999999 441.1h4.4l-2.2 2.4z" fill="#fff"/>
<path d="M932.0999999999999 438.90000000000003h2.6v4h-2.6z" fill="#dbe2ef" stroke="#fff" stroke-width="0.7"/><path d="M931.0999999999999 442.90000000000003h4.6 M933.4 442.90000000000003v2.8" stroke="#fff" stroke-width="0.8"/>
<path d="M940.3 439.8l4.4 4.6 M944.6999999999999 439.8l-4.4 4.6" stroke="#fff" stroke-width="0.95"/>
<circle cx="614.3" cy="458" r="1.3" stroke="#333" stroke-width="0.6"/><circle cx="617.7" cy="458" r="1.3" stroke="#333" stroke-width="0.6"/><path d="M612 457.6h1 M619 457.6h1" stroke="#333" stroke-width="0.5"/>
<path d="M941.3 491h4.2l-2.1 2.4z" fill="#222"/>
<circle cx="777" cy="507.6" r="4" fill="#e8f1fb"/><path d="M773.2 506.4h7.6 M773.4 509h7.2 M777 503.6v8 M775.2 504q-1.6 3.6 0 7.2 M778.8 504q1.6 3.6 0 7.2" stroke="#5a9bd6" stroke-width="0.6"/>
<circle cx="828.8" cy="507.8" r="3.9" fill="#d81e1e"/><path d="M827.1 506.1l3.4 3.4 M830.5 506.1l-3.4 3.4" stroke="#5a0a0a" stroke-width="1"/>
<path d="M853 503.8l4.2 7.6h-8.4z" fill="#f2cb1d" stroke="#c9a300" stroke-width="0.4"/><path d="M853 506.2v2.8 M853 509.8v.8" stroke="#3a3000" stroke-width="0.8"/>
</svg>
</body></html>
